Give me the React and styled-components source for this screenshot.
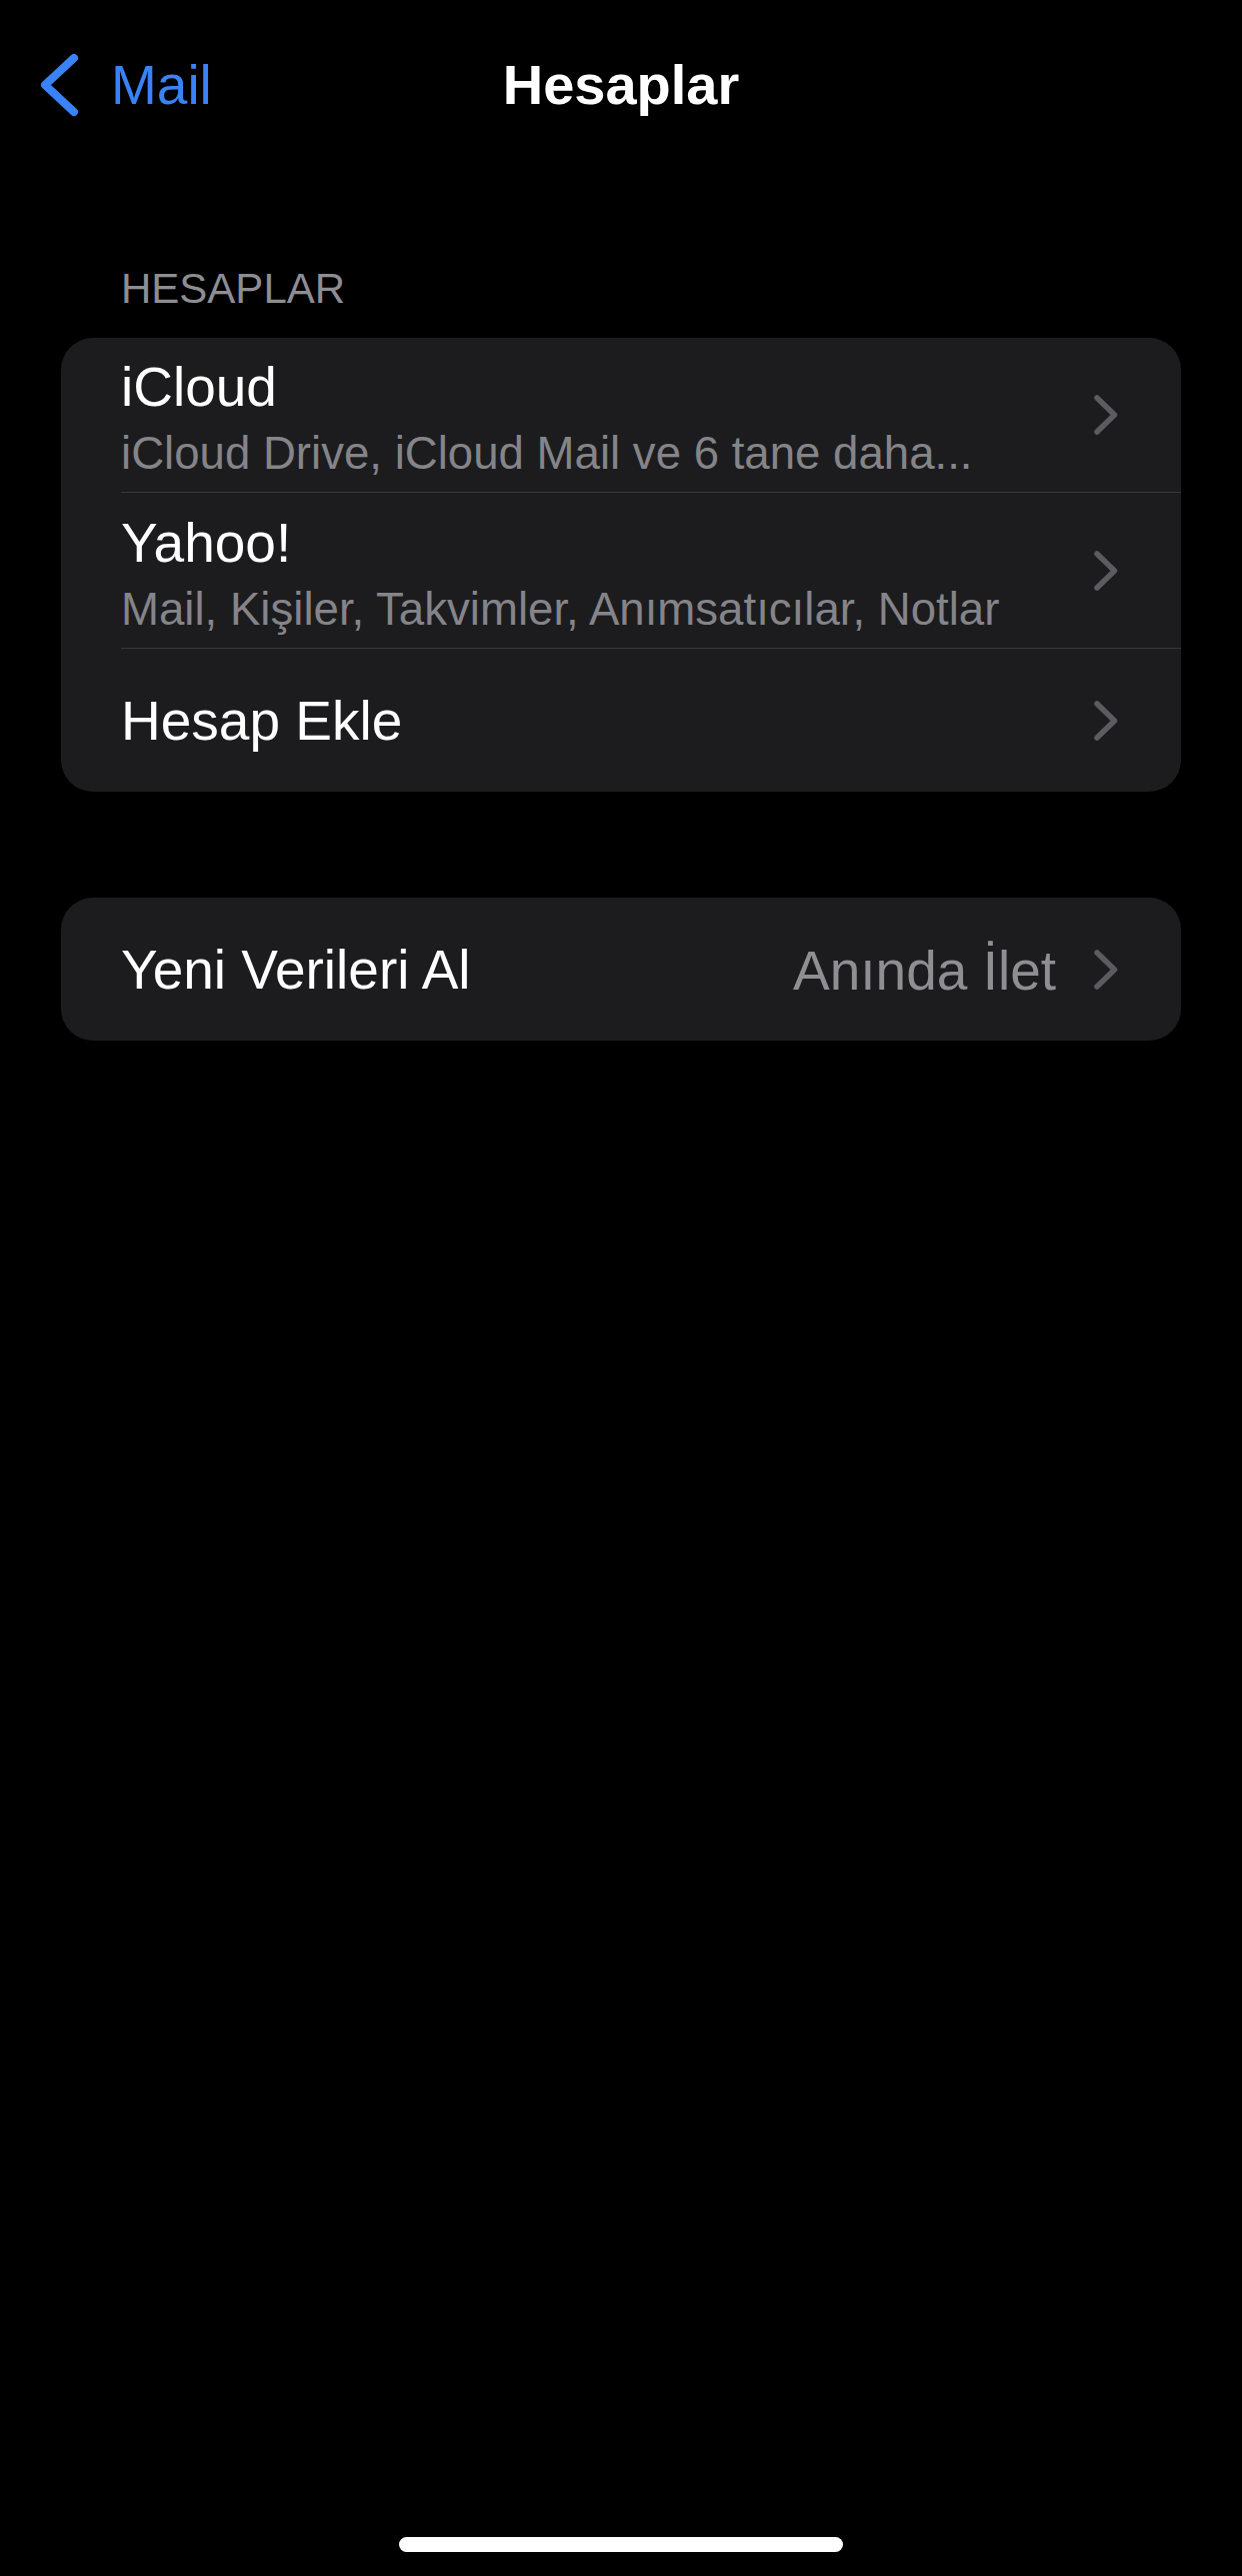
import React from 'react';
import styled, { createGlobalStyle } from 'styled-components';

const GlobalStyle = createGlobalStyle`
  html, body {
    margin: 0;
    padding: 0;
    background: #000;
  }
  body {
    font-family: "Liberation Sans", Arial, sans-serif;
    -webkit-font-smoothing: antialiased;
  }
`;

const Screen = styled.div`
  display: flex;
  flex-direction: column;
  width: 1242px;
  min-height: 2577px;
  background: #000;
  color: #fff;
  box-sizing: border-box;
  padding-bottom: 24px;
`;

const NavBar = styled.header`
  display: grid;
  grid-template-columns: 1fr auto 1fr;
  align-items: center;
  height: 170px;
`;

const BackButton = styled.div`
  display: flex;
  align-items: center;
  gap: 31px;
  padding-left: 38px;
  color: #3a82f7;
  font-size: 55px;
  line-height: 1;
`;

const Title = styled.h1`
  margin: 0;
  font-size: 56px;
  font-weight: 700;
  line-height: 1;
  color: #fff;
`;

const Section = styled.section`
  padding: 0 61px;
  margin-top: ${(p) => p.$top}px;
`;

const SectionHeader = styled.div`
  padding-left: 60px;
  margin-bottom: 24px;
  font-size: 42px;
  line-height: 50px;
  color: #8d8d93;
  text-transform: uppercase;
`;

const Card = styled.div`
  background: #1c1c1e;
  border-radius: 32px;
  overflow: hidden;
`;

const Row = styled.div`
  padding-left: 60px;
`;

const RowBody = styled.div`
  display: flex;
  align-items: center;
  box-sizing: border-box;
  height: ${(p) => p.$height}px;
  padding-right: 62px;
  border-top: ${(p) => (p.$first ? 'none' : '1px solid #38383a')};
`;

const TextBlock = styled.div`
  display: flex;
  flex-direction: column;
  gap: 8px;
  flex: 1;
  min-width: 0;
  padding-top: ${(p) => (p.$twoLine ? 6 : 1)}px;
`;

const Label = styled.div`
  font-size: 55px;
  line-height: 64px;
  color: #fff;
`;

const Detail = styled.div`
  font-size: 45.6px;
  line-height: 54px;
  color: #848489;
  white-space: nowrap;
`;

const Value = styled.div`
  font-size: 55px;
  line-height: 64px;
  color: #8e8e93;
  padding-top: 2px;
`;

const Chevron = styled.svg`
  flex: none;
  margin-left: ${(p) => (p.$gap ? 37 : 0)}px;
`;

const HomeIndicator = styled.div`
  margin: auto auto 0;
  width: 444px;
  height: 15px;
  border-radius: 8px;
  background: #fff;
`;

const BackIcon = () => (
  <svg width="42" height="66" viewBox="0 0 42 66" fill="none">
    <path
      d="M36 6 L7 33 L36 60"
      stroke="#3a82f7"
      strokeWidth="8"
      strokeLinecap="round"
      strokeLinejoin="round"
    />
  </svg>
);

const Disclosure = ({ gap }) => (
  <Chevron $gap={gap} width="26" height="44" viewBox="0 0 26 44" fill="none">
    <path
      d="M4 5 L21.5 22 L4 39"
      stroke="#5b5b60"
      strokeWidth="5.5"
      strokeLinecap="round"
      strokeLinejoin="round"
    />
  </Chevron>
);

const accounts = [
  { name: 'iCloud', detail: 'iCloud Drive, iCloud Mail ve 6 tane daha...', height: 154 },
  { name: 'Yahoo!', detail: 'Mail, Kişiler, Takvimler, Anımsatıcılar, Notlar', height: 156 },
  { name: 'Hesap Ekle', height: 144 },
];

export default function App() {
  return (
    <Screen>
      <GlobalStyle />
      <NavBar>
        <BackButton>
          <BackIcon />
          <span>Mail</span>
        </BackButton>
        <Title>Hesaplar</Title>
        <div />
      </NavBar>

      <Section $top={94}>
        <SectionHeader>Hesaplar</SectionHeader>
        <Card>
          {accounts.map((a, i) => (
            <Row key={a.name}>
              <RowBody $first={i === 0} $height={a.height}>
                <TextBlock $twoLine={!!a.detail}>
                  <Label>{a.name}</Label>
                  {a.detail && <Detail>{a.detail}</Detail>}
                </TextBlock>
                <Disclosure />
              </RowBody>
            </Row>
          ))}
        </Card>
      </Section>

      <Section $top={106}>
        <Card>
          <Row>
            <RowBody $first $height={143}>
              <TextBlock>
                <Label>Yeni Verileri Al</Label>
              </TextBlock>
              <Value>Anında İlet</Value>
              <Disclosure gap />
            </RowBody>
          </Row>
        </Card>
      </Section>

      <HomeIndicator />
    </Screen>
  );
}
